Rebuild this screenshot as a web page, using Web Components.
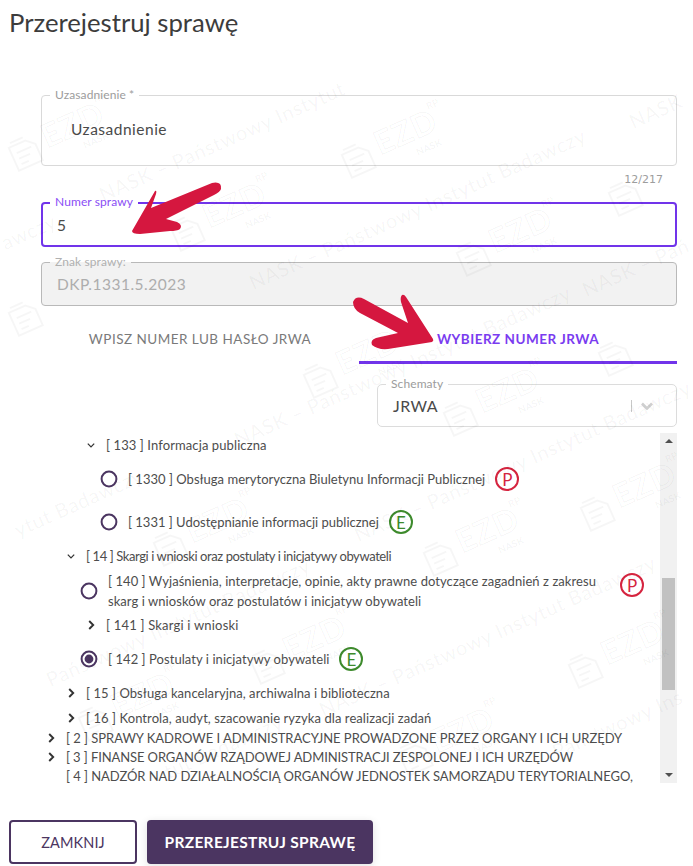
<!DOCTYPE html>
<html lang="pl">
<head>
<meta charset="utf-8">
<title>Przerejestruj sprawę</title>
<style>
  html, body { margin: 0; padding: 0; background: #fff; }
  body { font-family: Lato, "Noto Sans", sans-serif; color: #4d4d4d; }
</style>
</head>
<body>
<ezd-dialog heading="Przerejestruj sprawę">
  <ezd-field label="Uzasadnienie *" value="Uzasadnienie" kind="area"></ezd-field>
  <ezd-counter>12/217</ezd-counter>
  <ezd-field label="Numer sprawy" value="5" kind="focus"></ezd-field>
  <ezd-field label="Znak sprawy:" value="DKP.1331.5.2023" kind="disabled" style="margin-top:15px"></ezd-field>
  <ezd-tabs first="WPISZ NUMER LUB HASŁO JRWA" second="WYBIERZ NUMER JRWA"></ezd-tabs>
  <ezd-select label="Schematy" value="JRWA"></ezd-select>
  <ezd-tree>
    <ezd-row h="24" indent="46" ls=".1" icon="down">[ 133 ] Informacja publiczna</ezd-row>
    <ezd-row h="44" indent="57" ls=".02" icon="radio">[ 1330 ] Obsługa merytoryczna Biuletynu Informacji Publicznej<ezd-badge slot="badge" kind="P"></ezd-badge></ezd-row>
    <ezd-row h="42" indent="57" icon="radio">[ 1331 ] Udostępnianie informacji publicznej<ezd-badge slot="badge" kind="E"></ezd-badge></ezd-row>
    <ezd-row h="26" indent="26" ls="-.4" icon="down">[ 14 ] Skargi i wnioski oraz postulaty i inicjatywy obywateli</ezd-row>
    <ezd-row h="44" indent="37" ls=".06" icon="radio" wide>[ 140 ] Wyjaśnienia, interpretacje, opinie, akty prawne dotyczące zagadnień z zakresu<br>skarg i wniosków oraz postulatów i inicjatyw obywateli<ezd-badge slot="badge" kind="P"></ezd-badge></ezd-row>
    <ezd-row h="24" indent="46" ls=".2" icon="right">[ 141 ] Skargi i wnioski</ezd-row>
    <ezd-row h="44" indent="37" ls=".06" icon="checked">[ 142 ] Postulaty i inicjatywy obywateli<ezd-badge slot="badge" kind="E"></ezd-badge></ezd-row>
    <ezd-row h="24" indent="26" ls=".06" icon="right">[ 15 ] Obsługa kancelaryjna, archiwalna i biblioteczna</ezd-row>
    <ezd-row h="25" indent="26" ls=".07" icon="right">[ 16 ] Kontrola, audyt, szacowanie ryzyka dla realizacji zadań</ezd-row>
    <ezd-row h="15" indent="6" ls="-.03" icon="right">[ 2 ] SPRAWY KADROWE I ADMINISTRACYJNE PROWADZONE PRZEZ ORGANY I ICH URZĘDY</ezd-row>
    <ezd-row h="24" indent="6" ls="-.1" icon="right">[ 3 ] FINANSE ORGANÓW RZĄDOWEJ ADMINISTRACJI ZESPOLONEJ I ICH URZĘDÓW</ezd-row>
    <ezd-row h="14" indent="6" ls="-.05" icon="none">[ 4 ] NADZÓR NAD DZIAŁALNOŚCIĄ ORGANÓW JEDNOSTEK SAMORZĄDU TERYTORIALNEGO,</ezd-row>
  </ezd-tree>
  <ezd-button slot="footer" kind="outline">ZAMKNIJ</ezd-button>
  <ezd-button slot="footer" kind="solid">PRZEREJESTRUJ SPRAWĘ</ezd-button>
</ezd-dialog>

<script>
// Dialog shell
class EzdDialog extends HTMLElement {
    constructor() {
        super();
        this.attachShadow({ mode: 'open' });
    }

    connectedCallback() {
        this.shadowRoot.innerHTML = `
            <style>
                :host {
                    display: flex;
                    flex-direction: column;
                    position: relative;
                    width: 693px;
                    height: 866px;
                    overflow: hidden;
                    background: #fff;
                }
                h1 {
                    margin: 0;
                    height: 85px;
                    box-sizing: border-box;
                    padding: 4px 0 0 9px;
                    font-size: 25.7px;
                    line-height: 36px;
                    font-weight: 400;
                    color: #3c3c3c;
                }
                .form {
                    display: flex;
                    flex-direction: column;
                    margin: 10px 16px 0 41px;
                }
                .footer {
                    display: flex;
                    gap: 10px;
                    margin: 37px 0 0 9px;
                }
            </style>
            <h1>${this.getAttribute('heading')}</h1>
            <div class="form"><slot></slot></div>
            <div class="footer"><slot name="footer"></slot></div>
            <ezd-watermark></ezd-watermark>
            <ezd-arrows></ezd-arrows>
        `;
    }
}

// Outlined input with the label sitting on its border
class EzdField extends HTMLElement {
    constructor() {
        super();
        this.attachShadow({ mode: 'open' });
    }

    connectedCallback() {
        this.shadowRoot.innerHTML = `
            <style>
                :host { display: block; position: relative; }
                .box {
                    display: flex;
                    align-items: center;
                    box-sizing: border-box;
                    height: 44px;
                    padding: 0 15px;
                    border: 1px solid #b9b9b9;
                    border-radius: 4px;
                    font-size: 15.5px;
                    letter-spacing: .5px;
                    color: #4a4a4a;
                }
                .label {
                    position: absolute;
                    left: 9px;
                    top: -7px;
                    padding: 0 5px;
                    background: #fff;
                    font-size: 12px;
                    letter-spacing: .1px;
                    line-height: 14px;
                    color: #9c9c9c;
                }
                :host([kind="area"]) .box {
                    height: 71px;
                    padding: 0 29px 3px;
                    border-color: #d9d9d9;
                }
                :host([kind="focus"]) .box {
                    height: 45px;
                    padding: 0 14px;
                    border: 2px solid #7134ea;
                }
                :host([kind="focus"]) .label { color: #8a4df5; }
                :host([kind="disabled"]) .box {
                    background: #f2f2f2;
                    color: #adadad;
                    letter-spacing: .5px;
                }
                :host([kind="disabled"]) .label {
                    color: #b0b0b0;
                    background: linear-gradient(#fff 50%, #f2f2f2 50%);
                }
            </style>
            <div class="box">${this.getAttribute('value')}</div>
            <span class="label">${this.getAttribute('label')}</span>
        `;
    }
}

class EzdCounter extends HTMLElement {
    constructor() {
        super();
        this.attachShadow({ mode: 'open' });
        this.shadowRoot.innerHTML = `
            <style>
                :host {
                    display: block;
                    height: 36px;
                    box-sizing: border-box;
                    padding: 7px 14px 0 0;
                    text-align: right;
                    font: 11px/14px "DejaVu Sans", sans-serif;
                    color: #9d9d9d;
                }
            </style>
            <slot></slot>
        `;
    }
}

class EzdTabs extends HTMLElement {
    constructor() {
        super();
        this.attachShadow({ mode: 'open' });
    }

    connectedCallback() {
        this.shadowRoot.innerHTML = `
            <style>
                :host {
                    display: grid;
                    grid-template-columns: 1fr 1fr;
                    height: 58px;
                }
                .tab {
                    display: flex;
                    align-items: center;
                    justify-content: center;
                    padding-top: 7px;
                    font-size: 13.5px;
                    letter-spacing: .48px;
                    color: #7a7a7a;
                }
                .active {
                    border-bottom: 3px solid #7134ea;
                    padding-top: 10px;
                    color: #7a3cf0;
                    font-weight: 700;
                }
            </style>
            <div class="tab">${this.getAttribute('first')}</div>
            <div class="tab active">${this.getAttribute('second')}</div>
        `;
    }
}

class EzdSelect extends HTMLElement {
    constructor() {
        super();
        this.attachShadow({ mode: 'open' });
    }

    connectedCallback() {
        this.shadowRoot.innerHTML = `
            <style>
                :host {
                    display: block;
                    position: relative;
                    margin: 20px 0 0 336px;
                }
                .box {
                    display: flex;
                    align-items: center;
                    box-sizing: border-box;
                    height: 43px;
                    padding: 0 23px 0 15px;
                    border: 1px solid #dcdcdc;
                    border-radius: 5px;
                    font-size: 16px;
                    letter-spacing: .4px;
                    color: #4a4a4a;
                }
                .value { flex: 1; }
                .sep { width: 1px; height: 12px; background: #c8c8c8; margin-right: 9px; }
                svg { display: block; }
                .label {
                    position: absolute;
                    left: 9px;
                    top: -7px;
                    padding: 0 5px;
                    background: #fff;
                    font-size: 12px;
                    letter-spacing: .1px;
                    line-height: 14px;
                    color: #9c9c9c;
                }
            </style>
            <div class="box">
                <span class="value">${this.getAttribute('value')}</span>
                <span class="sep"></span>
                <svg width="12" height="8" viewBox="0 0 12 8" fill="none" stroke="#cfcfcf" stroke-width="2.6"><path d="M1 1.5l5 5 5-5"/></svg>
            </div>
            <span class="label">${this.getAttribute('label')}</span>
        `;
    }
}

class EzdTree extends HTMLElement {
    constructor() {
        super();
        this.attachShadow({ mode: 'open' });
        this.shadowRoot.innerHTML = `
            <style>
                :host {
                    display: flex;
                    height: 350px;
                    margin-top: 6px;
                    overflow: hidden;
                }
                .rows { flex: 1; min-width: 0; overflow: hidden; }
                .bar {
                    display: flex;
                    flex-direction: column;
                    align-items: center;
                    justify-content: space-between;
                    width: 17px;
                    background: #f1f1f1;
                    padding: 6px 0;
                    box-sizing: border-box;
                    position: relative;
                }
                .up, .down { width: 0; height: 0; border: 4px solid transparent; }
                .up { border-top: 0; border-bottom-color: #505050; }
                .down { border-bottom: 0; border-top-color: #505050; }
                .thumb {
                    position: absolute;
                    left: 2px;
                    top: 145px;
                    width: 13px;
                    height: 112px;
                    background: #c1c1c1;
                }
            </style>
            <div class="rows"><slot></slot></div>
            <div class="bar"><i class="up"></i><i class="thumb"></i><i class="down"></i></div>
        `;
    }
}

const ROW_ICONS = {
    down: '<svg width="10" height="7" viewBox="0 0 10 7" fill="none" stroke="#333" stroke-width="1.6"><path d="M1 1.2l4 4 4-4"/></svg>',
    right: '<svg width="7" height="10" viewBox="0 0 7 10" fill="none" stroke="#333" stroke-width="1.9"><path d="M1.2 1l4 4-4 4"/></svg>',
    radio: '<svg width="18" height="18" viewBox="0 0 18 18" fill="none" stroke="#4b3561" stroke-width="2"><circle cx="9" cy="9" r="7.4"/></svg>',
    checked: '<svg width="18" height="18" viewBox="0 0 18 18" fill="none" stroke="#4b3561" stroke-width="2"><circle cx="9" cy="9" r="7.4"/><circle cx="9" cy="9" r="4.4" fill="#4b3561" stroke="none"/></svg>',
    none: ''
};

class EzdRow extends HTMLElement {
    constructor() {
        super();
        this.attachShadow({ mode: 'open' });
    }

    connectedCallback() {
        const icon = this.getAttribute('icon');
        const isRadio = icon === 'radio' || icon === 'checked';
        this.shadowRoot.innerHTML = `
            <style>
                :host {
                    display: flex;
                    align-items: center;
                    height: ${this.getAttribute('h')}px;
                    padding-left: ${this.getAttribute('indent')}px;
                    font-size: 13px;
                    letter-spacing: ${this.getAttribute('ls') || 0}px;
                    line-height: 20px;
                    color: #4d4d4d;
                    white-space: nowrap;
                }
                .icon {
                    flex: none;
                    display: flex;
                    align-items: center;
                    justify-content: center;
                    width: ${isRadio ? 18 : 8}px;
                    margin-right: ${isRadio ? 10 : 11}px;
                    margin-left: ${isRadio ? 2 : 0}px;
                }
                .badge { display: flex; margin-left: 10px; }
                :host([wide]) .text { width: 502px; }
                :host([wide]) .badge { margin-top: -12px; }
            </style>
            <span class="icon">${ROW_ICONS[icon]}</span>
            <span class="text"><slot></slot></span>
            <span class="badge"><slot name="badge"></slot></span>
        `;
    }
}

class EzdBadge extends HTMLElement {
    constructor() {
        super();
        this.attachShadow({ mode: 'open' });
    }

    connectedCallback() {
        const kind = this.getAttribute('kind');
        this.shadowRoot.innerHTML = `
            <style>
                :host {
                    display: flex;
                    align-items: center;
                    justify-content: center;
                    box-sizing: border-box;
                    width: 24px;
                    height: 24px;
                    border: 2px solid ${kind === 'P' ? '#d5243f' : '#3d8a2c'};
                    border-radius: 50%;
                    font-size: 17px;
                    letter-spacing: 0;
                    line-height: 1;
                    color: ${kind === 'P' ? '#d5243f' : '#3d8a2c'};
                }
            </style>
            ${kind}
        `;
    }
}

class EzdButton extends HTMLElement {
    constructor() {
        super();
        this.attachShadow({ mode: 'open' });
        this.shadowRoot.innerHTML = `
            <style>
                :host {
                    display: flex;
                    align-items: center;
                    justify-content: center;
                    box-sizing: border-box;
                    height: 44px;
                    border-radius: 4px;
                    font-size: 14.5px;
                    letter-spacing: .1px;
                }
                :host([kind="outline"]) {
                    width: 128px;
                    border: 2px solid #4b3561;
                    color: #4b3561;
                }
                :host([kind="solid"]) {
                    width: 226px;
                    background: #4b3561;
                    color: #fff;
                    font-size: 15.5px;
                    letter-spacing: .3px;
                    font-weight: 700;
                    box-shadow: 0 2px 8px rgba(0,0,0,.12);
                }
            </style>
            <slot></slot>
        `;
    }
}

const WM_LOGOS = [
    [60,135,1],[222,215,1],[393,142,1],[508,240,1],[355,362,1],[495,400,1],
    [205,530,1],[475,540,1],[632,495,1],[302,648,1],[130,705,1],[620,652,1],[450,740,1],
    [660,180,0],[650,340,0],[60,300,0]
];
const WM_LINES = [
    [100,195,'NASK – Państwowy Instytut'],
    [250,283,'NASK – Państwowy Instytut Badawczy'],
    [355,535,'NASK – Państwowy Instytut Badawczy'],
    [235,440,'NASK – Państwowy Instytut Badawczy'],
    [15,530,'ytut Badawczy'],
    [320,710,'NASK – Państwowy Instytut Badawczy'],
    [47,680,'Państwowy Instytut Badawczy'],
    [553,752,'Państwowy Ins'],
    [165,772,'tut Badawczy'],
    [630,122,'NASK'],
    [583,290,'NASK – Pań'],
    [2,243,'awczy']
];
const WM_TOP = 70;

class EzdWatermark extends HTMLElement {
    constructor() {
        super();
        this.attachShadow({ mode: 'open' });
    }

    connectedCallback() {
        const logos = WM_LOGOS.map(([x, y, full]) => `
            <div class="logo" style="left:${x - 55}px;top:${y - WM_TOP - 25}px">
                <svg width="32" height="36" viewBox="0 0 32 36" fill="none" stroke="#000" stroke-opacity=".035" stroke-width="2">
                    <path d="M3 8h18l8 7v18H3z M6 4h14 M8 16h16 M8 22h12 M8 28h8"/>
                </svg>
                ${full ? '<span class="ezd">EZD</span><span class="rp">RP</span><span class="nask">NASK</span>' : ''}
            </div>`).join('');
        const lines = WM_LINES.map(([x, y, text]) =>
            `<div class="line" style="left:${x}px;top:${y - WM_TOP - 14}px">${text}</div>`).join('');
        this.shadowRoot.innerHTML = `
            <style>
                :host {
                    position: absolute;
                    left: 0;
                    top: ${WM_TOP}px;
                    width: 693px;
                    height: 720px;
                    overflow: hidden;
                    pointer-events: none;
                }
                .line {
                    position: absolute;
                    font: 20px/28px Lato, sans-serif;
                    letter-spacing: .7px;
                    color: rgba(0,0,0,.042);
                    white-space: nowrap;
                    transform-origin: 0 50%;
                    transform: rotate(-24deg);
                }
                .logo {
                    position: absolute;
                    width: 110px;
                    height: 50px;
                    transform: rotate(-24deg);
                }
                .logo svg { position: absolute; left: 0; top: 8px; }
                .ezd {
                    position: absolute;
                    left: 38px;
                    top: 2px;
                    font: 700 32px/36px Lato, sans-serif;
                    letter-spacing: 1px;
                    color: transparent;
                    -webkit-text-stroke: 1.2px rgba(0,0,0,.04);
                }
                .rp {
                    position: absolute;
                    left: 100px;
                    top: 0;
                    font: 700 10px/12px Lato, sans-serif;
                    color: rgba(0,0,0,.04);
                }
                .nask {
                    position: absolute;
                    left: 72px;
                    top: 38px;
                    font: 900 10px/12px Lato, sans-serif;
                    color: rgba(0,0,0,.04);
                }
            </style>
            ${logos}${lines}
        `;
    }
}

// The two hand drawn red arrows on top of the screenshot
class EzdArrows extends HTMLElement {
    constructor() {
        super();
        this.attachShadow({ mode: 'open' });
        this.shadowRoot.innerHTML = `
            <style>
                :host {
                    position: absolute;
                    left: 0;
                    top: 0;
                    pointer-events: none;
                }
                svg { display: block; }
            </style>
            <svg width="693" height="866" viewBox="0 0 693 866" fill="#d5173f">
                <path d="M132 231L155 191Q157 190 156 194L151 208L212 183Q222 181 221 189Q220 192 214 195L166 219L177 222Q183 225 180 229Q177 231 170 231L140 234Q132 234 132 231Z"/>
                <path d="M402 295Q400 297 401 302L408 323L364 299Q356 295 353 302Q353 309 360 313L398 333L376 338Q370 340 372 345Q378 350 388 349L432 342Q434 341 433 339L406 297Q404 294 402 295Z"/>
            </svg>
        `;
    }
}

customElements.define('ezd-dialog', EzdDialog);
customElements.define('ezd-field', EzdField);
customElements.define('ezd-counter', EzdCounter);
customElements.define('ezd-tabs', EzdTabs);
customElements.define('ezd-select', EzdSelect);
customElements.define('ezd-tree', EzdTree);
customElements.define('ezd-row', EzdRow);
customElements.define('ezd-badge', EzdBadge);
customElements.define('ezd-button', EzdButton);
customElements.define('ezd-watermark', EzdWatermark);
customElements.define('ezd-arrows', EzdArrows);
</script>
</body>
</html>
